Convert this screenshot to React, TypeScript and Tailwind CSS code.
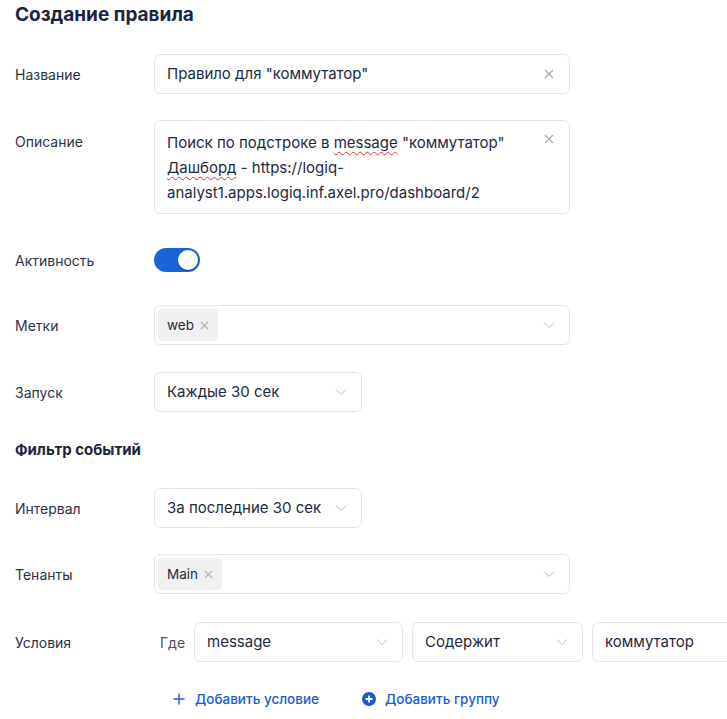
import React from 'react';

const font = { fontFamily: 'Inter, "Noto Sans", sans-serif' };

function Chevron() {
  return (
    <svg width="12" height="8" viewBox="0 0 12 8" fill="none" className="shrink-0">
      <polyline points="1,1.5 6,6.5 11,1.5" stroke="#b9bdc4" strokeWidth="1" />
    </svg>
  );
}

function Cross({ size = 10, color = '#a9adb4' }: { size?: number; color?: string }) {
  return (
    <svg width={size} height={size} viewBox="0 0 10 10" fill="none" className="shrink-0">
      <path d="M1 1L9 9M9 1L1 9" stroke={color} strokeWidth="1.3" />
    </svg>
  );
}

function Label({ children, top }: { children: React.ReactNode; top?: boolean }) {
  return (
    <div
      className={`w-[139px] shrink-0 text-[14px] text-[#2a3346] ${
        top ? 'self-start pt-[11px]' : ''
      }`}
    >
      {children}
    </div>
  );
}

function Select({ value, width }: { value: string; width: string }) {
  return (
    <div
      className={`${width} h-10 shrink-0 rounded-md border border-[#e3e5e8] bg-white flex items-center justify-between pl-3 pr-[14px]`}
    >
      <span className="text-[15px] text-[#1e2a40]">{value}</span>
      <Chevron />
    </div>
  );
}

function TagSelect({ tag }: { tag: string }) {
  return (
    <div className="w-[416px] h-10 rounded-md border border-[#e3e5e8] bg-white flex items-center justify-between pl-[3px] pr-[14px]">
      <div className="h-8 rounded bg-[#f0f0f1] flex items-center gap-[6px] px-[9px]">
        <span className="text-[13.5px] text-[#1e2a40]">{tag}</span>
        <Cross size={9} />
      </div>
      <Chevron />
    </div>
  );
}

export default function App() {
  return (
    <div style={font} className="w-[727px] h-[719px] overflow-hidden bg-white pl-[15px]">
      <h1 className="text-[19px] leading-7 font-bold text-[#1b2540] pt-[1px]">
        Создание правила
      </h1>

      <div className="flex flex-col mt-[25px]">
        {/* Название */}
        <div className="flex items-center">
          <Label>Название</Label>
          <div className="w-[416px] h-10 rounded-md border border-[#e3e5e8] flex items-center justify-between pl-3 pr-[15px]">
            <span className="text-[15px] text-[#1e2a40]">Правило для "коммутатор"</span>
            <Cross />
          </div>
        </div>

        {/* Описание */}
        <div className="flex items-center mt-[26px]">
          <Label top>Описание</Label>
          <div className="w-[416px] h-[94px] rounded-md border border-[#e3e5e8] flex justify-between pl-3 pr-[15px] pt-[9px]">
            <div className="text-[15px] leading-[25px] text-[#1e2a40]">
              <div>
                Поиск по подстроке в{' '}
                <span className="underline decoration-wavy decoration-[#e0302a] decoration-1 underline-offset-[3px]">
                  message
                </span>{' '}
                "коммутатор"
              </div>
              <div>
                <span className="underline decoration-wavy decoration-[#e0302a] decoration-1 underline-offset-[3px]">
                  Дашборд
                </span>{' '}
                - https://logiq-
              </div>
              <div>analyst1.apps.logiq.inf.axel.pro/dashboard/2</div>
            </div>
            <div className="pt-[4px]">
              <Cross />
            </div>
          </div>
        </div>

        {/* Активность */}
        <div className="flex items-center h-10 mt-[26px]">
          <Label>Активность</Label>
          <div className="w-[46px] h-6 rounded-full bg-[#1866d6] flex items-center justify-end pr-[2px]">
            <div className="w-5 h-5 rounded-full bg-white shadow-[0_1px_2px_rgba(0,0,0,0.3)]" />
          </div>
        </div>

        {/* Метки */}
        <div className="flex items-center mt-[25px]">
          <Label>Метки</Label>
          <TagSelect tag="web" />
        </div>

        {/* Запуск */}
        <div className="flex items-center mt-[27px]">
          <Label>Запуск</Label>
          <Select value="Каждые 30 сек" width="w-[208px]" />
        </div>

        <h2 className="text-[15px] leading-5 font-bold text-[#1b2540] mt-[28px]">Фильтр событий</h2>

        {/* Интервал */}
        <div className="flex items-center mt-[28px]">
          <Label>Интервал</Label>
          <Select value="За последние 30 сек" width="w-[208px]" />
        </div>

        {/* Тенанты */}
        <div className="flex items-center mt-[26px]">
          <Label>Тенанты</Label>
          <TagSelect tag="Main" />
        </div>

        {/* Условия */}
        <div className="flex items-center mt-[28px]">
          <Label>Условия</Label>
          <span className="text-[14px] text-[#4a5263] ml-[6px] w-[34px] shrink-0">Где</span>
          <Select value="message" width="w-[209px]" />
          <div className="ml-[9px]">
            <Select value="Содержит" width="w-[171px]" />
          </div>
          <div className="ml-[9px] w-[200px] h-10 shrink-0 rounded-md border border-[#e3e5e8] flex items-center pl-3">
            <span className="text-[15px] text-[#1e2a40]">коммутатор</span>
          </div>
        </div>

        <div className="flex items-center gap-[43px] mt-[27px] pl-[158px] text-[13.5px] font-medium text-[#1a5ccc]">
          <button className="flex items-center gap-[10px]">
            <svg width="12" height="12" viewBox="0 0 12 12" fill="none">
              <path d="M6 0.5V11.5M0.5 6H11.5" stroke="#1a5ccc" strokeWidth="1.4" />
            </svg>
            Добавить условие
          </button>
          <button className="flex items-center gap-[9px]">
            <svg width="14" height="14" viewBox="0 0 14 14" fill="none">
              <circle cx="7" cy="7" r="7" fill="#1a5ccc" />
              <path d="M7 3.5V10.5M3.5 7H10.5" stroke="white" strokeWidth="1.8" />
            </svg>
            Добавить группу
          </button>
        </div>
      </div>
    </div>
  );
}
